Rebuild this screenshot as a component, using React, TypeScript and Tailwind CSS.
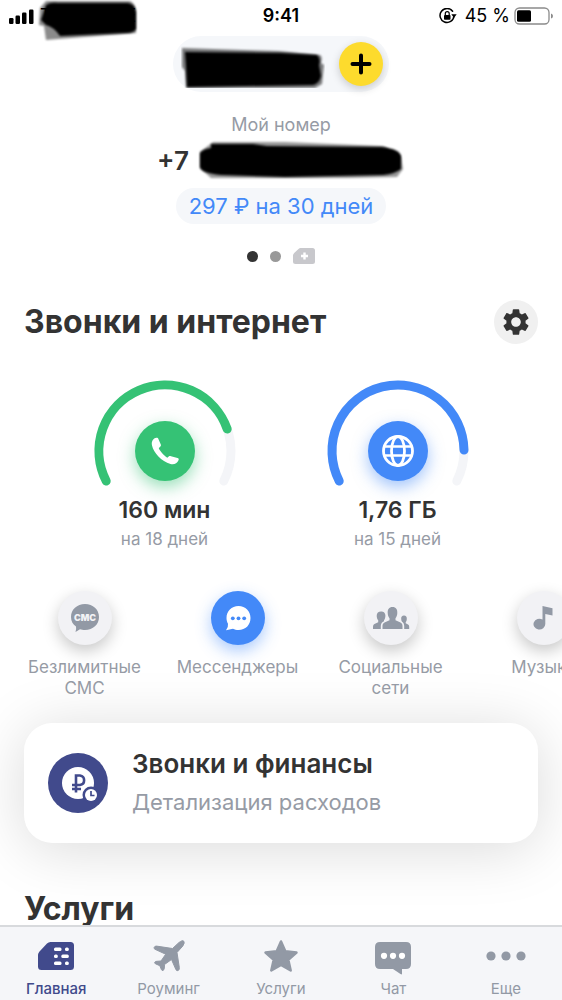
import type { ReactNode } from "react";
import { MdSettings } from "react-icons/md";

const FONT = "font-['Inter','Noto_Sans',sans-serif]";

type Gauge = {
  id: string;
  value: string;
  period: string;
  arc: string;
  stroke: string;
  disc: string;
  icon: ReactNode;
};

type QuickAction = {
  label: string;
  active?: boolean;
  icon: ReactNode;
};

type Tab = {
  label: string;
  active?: boolean;
  icon: ReactNode;
};

const gauges: Gauge[] = [
  {
    id: "calls",
    value: "160 мин",
    period: "на 18 дней",
    arc: "M13.200 101A66 66 0 1 1 134.200 49",
    stroke: "#35c275",
    disc: "bg-[#35c275] shadow-[0_6px_16px_rgba(53,194,117,0.5)]",
    icon: <PhoneIcon />,
  },
  {
    id: "internet",
    value: "1,76 ГБ",
    period: "на 15 дней",
    arc: "M13.200 101A66 66 0 1 1 138 70",
    stroke: "#4389f8",
    disc: "bg-[#4389f8] shadow-[0_6px_16px_rgba(67,137,248,0.5)]",
    icon: <GlobeIcon />,
  },
];

const actions: QuickAction[] = [
  { label: "Безлимитные СМС", icon: <SmsIcon /> },
  { label: "Мессенджеры", active: true, icon: <MessengerIcon /> },
  { label: "Социальные сети", icon: <PeopleIcon /> },
  { label: "Музыка", icon: <NoteIcon /> },
];

const tabs: Tab[] = [
  { label: "Главная", active: true, icon: <SimIcon /> },
  { label: "Роуминг", icon: <PlaneIcon /> },
  { label: "Услуги", icon: <StarIcon /> },
  { label: "Чат", icon: <ChatIcon /> },
  { label: "Еще", icon: <MoreIcon /> },
];

export default function App() {
  return (
    <div className={`flex h-dvh flex-col overflow-hidden bg-white text-[#333333] ${FONT}`}>
      <StatusBar />

      <main className="min-h-0 flex-1 overflow-hidden">
        <AccountHeader />

        <section>
          <div className="flex items-center justify-between px-6">
            <h1 className="text-[32px] leading-9 font-bold">Звонки и интернет</h1>
            <button
              type="button"
              aria-label="Настройки"
              className="flex size-11 items-center justify-center rounded-full bg-[#f0f0f0]"
            >
              <MdSettings size={32} />
            </button>
          </div>

          <div className="mt-9 grid grid-cols-2 px-12">
            {gauges.map((gauge) => (
              <GaugeCard key={gauge.id} gauge={gauge} />
            ))}
          </div>
        </section>

        <section className="mt-[39px] flex overflow-x-clip px-2">
          {actions.map((action) => (
            <button
              key={action.label}
              type="button"
              className="flex w-[153px] shrink-0 flex-col items-center px-3"
            >
              <span
                className={`flex size-[54px] items-center justify-center rounded-full ${
                  action.active
                    ? "bg-[#4389f8] text-white shadow-[0_6px_16px_rgba(67,137,248,0.45)]"
                    : "bg-[#f2f2f5] text-[#9299a5] shadow-[0_6px_16px_rgba(0,0,0,0.22)]"
                }`}
              >
                {action.icon}
              </span>
              <span className="mt-3 text-[17px] leading-[21px] text-[#969ba5]">
                {action.label}
              </span>
            </button>
          ))}
        </section>

        <section className="mt-6 px-6">
          <a
            href="#finance"
            className="flex h-30 items-center gap-6 rounded-[28px] bg-white px-6 shadow-[0_6px_60px_rgba(0,0,0,0.15)]"
          >
            <FinanceIcon />
            <span className="flex flex-col gap-1.5">
              <span className="text-[26px] leading-8 font-semibold">Звонки и финансы</span>
              <span className="text-[22px] leading-8 text-[#969ba5]">Детализация расходов</span>
            </span>
          </a>
        </section>

        <section className="mt-12 px-6">
          <h2 className="text-[32px] leading-9 font-bold">Услуги</h2>
        </section>
      </main>

      <nav className="relative grid shrink-0 grid-cols-5 border-t-2 border-[#d8dadd] bg-[#f5f6f9] pt-[9px] pb-px">
        {tabs.map((tab) => (
          <a
            key={tab.label}
            href="#tab"
            className={`flex flex-col items-center gap-[3px] text-[15px] leading-5 ${
              tab.active ? "font-medium text-[#414a8c]" : "text-[#9299a5]"
            }`}
          >
            <span className="flex h-10 items-center">{tab.icon}</span>
            <span>{tab.label}</span>
          </a>
        ))}
      </nav>
    </div>
  );
}

function StatusBar() {
  return (
    <div className="grid h-8 shrink-0 grid-cols-3 items-center px-2 text-lg leading-8 text-black">
      <div className="flex items-center gap-1.5">
        <svg width="26" height="16" viewBox="0 0 26 16" fill="currentColor">
          <rect x="1" y="10" width="4.5" height="6" rx="1.2" />
          <rect x="7.5" y="7.500" width="4.500" height="8.500" rx="1.2" />
          <rect x="14" y="4.500" width="4.500" height="11.500" rx="1.2" />
          <rect x="21" y="1.500" width="4.500" height="14.500" rx="1.2" />
        </svg>
        <span className="relative flex h-8 w-24 items-center justify-between">
          <span>T</span>
          <span>E</span>
          <svg
            className="absolute top-0 -left-0.5 overflow-visible"
            width="104"
            height="44"
            viewBox="0 0 104 44"
            fill="none"
          >
            <filter id="soft-a">
              <feGaussianBlur stdDeviation="1.3" />
            </filter>
            <path
              d="M8 1 92 1Q98 4 98 12V33L8 40 6 26 1 25 2 8Z"
              fill="#000"
              opacity="0.45"
              filter="url(#soft-a)"
            />
            <path
              d="M8 5Q12 2 20 3H90Q97 4 98 12V29Q96 33 88 33L22 36Q16 27 8 25L3 20Z"
              fill="#000"
              filter="url(#soft-a)"
            />
          </svg>
        </span>
      </div>
      <span className="text-center font-semibold">9:41</span>
      <div className="flex items-center justify-end gap-1">
        <svg className="mr-1" width="18" height="16" viewBox="0 0 18 16" fill="none">
          <path
            d="M13.600 3.200A7 7 0 1 0 15 8.200"
            stroke="currentColor"
            strokeWidth="1.5"
            strokeLinecap="round"
          />
          <path d="M12.300 6.200H17.700L15 9.800Z" fill="currentColor" />
          <rect x="5" y="7" width="6.500" height="4.800" rx="0.8" fill="currentColor" />
          <path d="M6.300 7V5.600A1.950 1.950 0 0 1 10.200 5.600V7" stroke="currentColor" strokeWidth="1.2" />
        </svg>
        <span>45 %</span>
        <svg width="40" height="18" viewBox="0 0 40 18" fill="none">
          <rect x="1" y="1" width="34" height="16" rx="4.500" stroke="#8b8b8b" strokeWidth="1.3" />
          <rect x="3" y="3.200" width="14" height="11.600" rx="1.500" fill="currentColor" />
          <path d="M37 6.500Q39 7 39 9T37 11.500Z" fill="#8b8b8b" />
        </svg>
      </div>
    </div>
  );
}

function AccountHeader() {
  return (
    <header className="flex flex-col items-center pt-1 pb-9">
      <div className="flex h-14 w-[216px] items-center justify-between rounded-full bg-[#f5f7fa] pr-1.5 pl-2">
        <svg width="144" height="48" viewBox="0 -1 144 48">
          <filter id="soft-b">
            <feGaussianBlur stdDeviation="1" />
          </filter>
          <path
            d="M1 7 98 10 139 14Q142 16 140 22L143 24 141 43 134 47 5 47 4 30 1 26Z"
            opacity="0.5"
            filter="url(#soft-b)"
          />
          <path
            d="M4 11 100 12 136 14Q140 18 138 24L140 35Q138 43 132 44L6 46 5 25Z"
            filter="url(#soft-b)"
          />
        </svg>
        <button
          type="button"
          aria-label="Пополнить"
          className="flex size-11 items-center justify-center rounded-full bg-[#fddb2d] shadow-[0_3px_8px_rgba(0,0,0,0.18)]"
        >
          <svg width="22" height="22" viewBox="0 0 22 22">
            <path d="M11 2.500V19.500M2.500 11H19.500" stroke="#000" strokeWidth="4" strokeLinecap="round" />
          </svg>
        </button>
      </div>

      <p className="mt-5 text-lg leading-[26px] text-[#969ba5]">Мой номер</p>

      <p className="flex h-11 items-center gap-2 text-[26px] font-semibold">
        +7
        <svg width="208" height="42" viewBox="0 0 208 42">
          <filter id="soft-c">
            <feGaussianBlur stdDeviation="1.1" />
          </filter>
          <path
            d="M16 3 88 3 186 7 204 17 206 30 200 38 150 39 14 39 3 29 3 13Z"
            opacity="0.4"
            filter="url(#soft-c)"
          />
          <path
            d="M14 5H56L70 7 184 8Q204 10 204 18V30Q198 35 186 36L88 38 24 36Q4 34 3 28V14Q6 10 14 9Z"
            filter="url(#soft-c)"
          />
        </svg>
      </p>

      <button
        type="button"
        className="mt-1.5 h-9 rounded-full bg-[#f5f7fa] px-[13px] text-[22px] leading-9 text-[#4389f8]"
      >
        297 ₽ на 30 дней
      </button>

      <div className="mt-6 flex items-center gap-3">
        <span className="size-[11px] rounded-full bg-[#333333]" />
        <span className="size-[11px] rounded-full bg-[#999999]" />
        <svg width="22" height="16" viewBox="0 0 22 16">
          <path
            d="M7.500 0H19.500Q22 0 22 2.500V13.500Q22 16 19.500 16H2.500Q0 16 0 13.500V7.500Q0 6 1.200 5L5.500 1Q6.500 0 7.500 0Z"
            fill="#c8c8cc"
          />
          <path d="M11.500 4.500V11.500M8 8H15" stroke="#fff" strokeWidth="2.4" />
        </svg>
      </div>
    </header>
  );
}

function GaugeCard({ gauge }: { gauge: Gauge }) {
  return (
    <div className="flex flex-col items-center">
      <div className="relative flex h-[106px] w-36 justify-center pt-[41px]">
        <svg
          className="absolute top-0 left-0 overflow-visible"
          width="144"
          height="106"
          viewBox="0 0 144 106"
          fill="none"
          strokeWidth="9"
          strokeLinecap="round"
        >
          <path d="M13.200 101A66 66 0 1 1 130.800 101" stroke="#f4f5f8" />
          <path d={gauge.arc} stroke={gauge.stroke} />
        </svg>
        <span
          className={`flex size-15 items-center justify-center rounded-full text-white ${gauge.disc}`}
        >
          {gauge.icon}
        </span>
      </div>
      <p className="mt-2 text-[23px] leading-8 font-semibold">{gauge.value}</p>
      <p className="text-[17px] leading-[26px] text-[#969ba5]">{gauge.period}</p>
    </div>
  );
}

function PhoneIcon() {
  return (
    <svg width="32" height="32" viewBox="0 0 32 32" fill="currentColor">
      <path d="M3.500 5.500C4.500 3.500 6.500 2.300 8.300 2.800C9 3 9.200 3.500 9.500 4.300L11.800 9.600C12.200 10.600 11.900 11.300 11 12L9.800 13C10 15 14.800 20.500 18.300 22.800L19.700 21.500C20.500 20.900 21 20.900 22 21.200L28.500 23C29.800 23.400 30 24.200 29.500 25.300C28 28.500 25 30 21.500 29C12.500 26.500 4.500 17.500 3 10.500C2.600 8.500 2.700 7 3.500 5.500Z" />
    </svg>
  );
}

function GlobeIcon() {
  return (
    <svg
      width="34"
      height="34"
      viewBox="0 0 34 34"
      fill="none"
      stroke="currentColor"
      strokeWidth="2.8"
    >
      <circle cx="17" cy="17" r="14.500" />
      <ellipse cx="17" cy="17" rx="6.500" ry="14.500" />
      <path d="M3.500 12.500H30.500M3.500 21.500H30.500" strokeWidth="2.6" />
    </svg>
  );
}

function SmsIcon() {
  return (
    <svg width="30" height="30" viewBox="0 0 30 30" fill="currentColor">
      <path d="M15 1C23 1 29 6.500 29 14S23 27 15 27C13 27 11.500 26.700 10 26.200L5.500 29Q6.500 26 6 23.500C3 21.500 1 18.500 1 14C1 6.500 7 1 15 1Z" />
      <text
        x="15"
        y="17.500"
        textAnchor="middle"
        fontSize="9"
        fontWeight="900"
        fill="#f2f2f5"
      >
        СМС
      </text>
    </svg>
  );
}

function MessengerIcon() {
  return (
    <svg width="28" height="28" viewBox="0 0 28 28">
      <path
        d="M14.500 2C21.500 2 26.500 7 26.500 14S21.500 26 14.500 26C12.500 26 10.500 25.600 9 24.800L2 26.200Q4.500 23 4 19.800C3 18 2.500 16 2.500 14C2.500 7 7.500 2 14.500 2Z"
        fill="currentColor"
      />
      <g fill="#4389f8">
        <circle cx="8.800" cy="14.300" r="1.900" />
        <circle cx="14.500" cy="14.300" r="1.900" />
        <circle cx="20.200" cy="14.300" r="1.900" />
      </g>
    </svg>
  );
}

function PeopleIcon() {
  return (
    <svg width="38" height="24" viewBox="0 0 38 24" fill="currentColor">
      <path d="M20.500 1C24 1 25.500 3.500 25.300 7C25.200 9.500 24.500 11 23.500 12.200V14.200L28.500 16.500C30 17.300 30.500 18.500 30.500 20V23H10.500V20C10.500 18.500 11 17.300 12.500 16.500L17.500 14.200V12.200C16.500 11 15.800 9.500 15.700 7C15.500 3.500 17 1 20.500 1Z" />
      <path d="M9 5.500C11.500 5.500 13.500 6.800 13.400 10C13.300 12 12.800 13.300 12 14.300V15.200C10 16.300 8.800 17.500 8.800 20V23H1V21C1 19.500 1.500 18.500 3 17.800L6.200 16.200V14.300C5.300 13.300 4.800 12 4.700 10C4.600 6.800 6.500 5.500 9 5.500Z" />
      <path d="M32 9.500C34 9.500 35 11 34.800 13C34.700 14.500 34.300 15.500 33.700 16.200V17.300L36 18.500C37 19 37.200 20 37.200 21V23H32.200V20C32.200 18 31.500 16.700 30 15.700C29.500 15 29.200 14 29.200 13C29 11 30 9.500 32 9.500Z" />
    </svg>
  );
}

function NoteIcon() {
  return (
    <svg width="24" height="28" viewBox="0 0 24 28" fill="currentColor">
      <path d="M10.500 2 20.500 4.200V11.500L13.300 10V20A5.900 5.400 0 1 1 10.500 15.500Z" />
    </svg>
  );
}

function FinanceIcon() {
  return (
    <svg className="size-15 shrink-0" viewBox="0 0 60 60" fill="none">
      <circle cx="30" cy="30" r="30" fill="#414a8c" />
      <circle cx="30" cy="30" r="16" fill="#fff" />
      <path
        d="M28 39.500V22.500H32A4.800 4.800 0 0 1 32 32H24M24 36H33"
        stroke="#414a8c"
        strokeWidth="2.6"
      />
      <circle cx="43" cy="42" r="8.500" fill="#414a8c" />
      <circle cx="43" cy="42" r="6" fill="#fff" />
      <path d="M43 38V42.500H46.500" stroke="#414a8c" strokeWidth="1.700" />
    </svg>
  );
}

function SimIcon() {
  return (
    <svg width="38" height="30" viewBox="0 0 38 30">
      <path
        d="M13.500 1H33.500Q37 1 37 4.500V25.500Q37 29 33.500 29H4.500Q1 29 1 25.500V14Q1 12 2.500 10.500L10 2.500Q11.500 1 13.500 1Z"
        fill="currentColor"
      />
      <g fill="#fff">
        <rect x="17" y="6.500" width="7.500" height="3.500" rx="1.500" />
        <rect x="28" y="6.500" width="3.800" height="3.500" rx="1.500" />
        <rect x="17" y="13.500" width="3.800" height="3.500" rx="1.500" />
        <rect x="24.300" y="13.500" width="7.500" height="3.500" rx="1.500" />
        <rect x="17" y="20.500" width="7.500" height="3.500" rx="1.500" />
        <rect x="28" y="20.500" width="3.800" height="3.500" rx="1.500" />
      </g>
    </svg>
  );
}

function PlaneIcon() {
  return (
    <svg
      width="34"
      height="34"
      viewBox="0 0 34 34"
      fill="currentColor"
      stroke="currentColor"
      strokeWidth="1"
      strokeLinejoin="round"
    >
      <path d="M27 3.500Q30.500 .8 31.800 2.200Q33 3.700 30.800 7L25 13.500L27.300 28.500Q27.500 30.500 26.500 31.300Q25 32.300 24 30.800L19.500 20.500L12.500 25.500L12.300 29.500Q12 31 11 31.500Q10 31.800 9.500 30.800L7.800 26.700L3.300 24.700Q2.200 24 2.800 23.200Q3.500 22.200 5 22.300L9 22L13.700 15.200L3 10.300Q1.500 9.500 2.200 8.300Q2.800 7 4.500 7.100L20.500 9.500Z" />
    </svg>
  );
}

function StarIcon() {
  return (
    <svg width="36" height="34" viewBox="0 0 36 34">
      <path
        d="M18 2.500 22.300 12.300 33.500 13.500 25.300 20.800 27.700 31.500 18 26 8.300 31.500 10.700 20.800 2.500 13.500 13.700 12.300Z"
        fill="currentColor"
        stroke="currentColor"
        strokeWidth="2.500"
        strokeLinejoin="round"
      />
    </svg>
  );
}

function ChatIcon() {
  return (
    <svg width="38" height="40" viewBox="0 -5 38 40">
      <path
        d="M6 1H32Q37 1 37 6V23Q37 28 32 28H28V32.500Q28 34 26.500 33L19 28H6Q1 28 1 23V6Q1 1 6 1Z"
        fill="currentColor"
      />
      <g fill="#fff">
        <circle cx="10" cy="14.800" r="3.100" />
        <circle cx="19" cy="14.800" r="3.100" />
        <circle cx="28" cy="14.800" r="3.100" />
      </g>
    </svg>
  );
}

function MoreIcon() {
  return (
    <svg width="40" height="10" viewBox="0 0 40 10" fill="currentColor">
      <circle cx="5" cy="5" r="4.600" />
      <circle cx="20" cy="5" r="4.600" />
      <circle cx="35" cy="5" r="4.600" />
    </svg>
  );
}
